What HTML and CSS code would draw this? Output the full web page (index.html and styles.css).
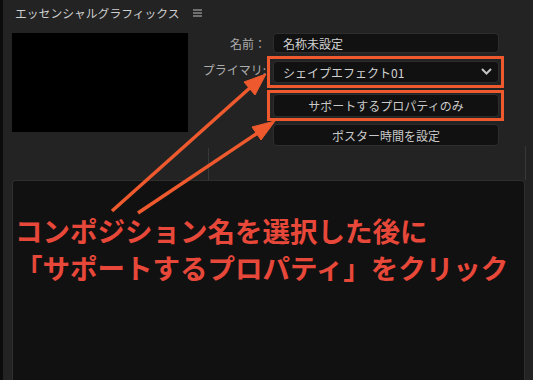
FILE: index.html
```html
<!DOCTYPE html>
<html lang="ja">
<head>
<meta charset="utf-8">
<title>エッセンシャルグラフィックス</title>
<link rel="stylesheet" href="styles.css">
</head>
<body>
<div class="app">
  <div class="edge"></div>
  <div class="main">
    <header class="hdr">
      <span class="title">エッセンシャルグラフィックス</span>
      <span class="menu">
        <svg width="9" height="8" viewBox="0 0 9 8"><path d="M0 1H9M0 4H9M0 7H9" stroke="#bdbdbd" stroke-width="1"/></svg>
      </span>
    </header>
    <section class="top">
      <div class="preview"></div>
      <div class="form">
        <div class="row">
          <label class="lbl">名前：</label>
          <div class="field">名称未設定</div>
        </div>
        <div class="row">
          <label class="lbl lbl-up">プライマリ:</label>
          <div class="hl hl-a">
            <div class="field select">
              <span>シェイプエフェクト01</span>
              <svg class="chev" width="11" height="7" viewBox="0 0 11 7"><polyline points="1,1 5.5,5.5 10,1" fill="none" stroke="#c4c4c4" stroke-width="2"/></svg>
            </div>
          </div>
        </div>
        <div class="row">
          <span class="lbl"></span>
          <div class="hl hl-b">
            <div class="btn btn-b">サポートするプロパティのみ</div>
          </div>
        </div>
        <div class="row">
          <span class="lbl"></span>
          <div class="btn btn-c">ポスター時間を設定</div>
        </div>
      </div>
    </section>
    <div class="gap">
      <div class="vline vline-a"></div>
      <div class="vline vline-b"></div>
    </div>
    <section class="panel">
      <p class="note">コンポジション名を選択した後に<br>「サポートするプロパティ」をクリック</p>
    </section>
  </div>
  <svg class="arrows" width="533" height="380" viewBox="0 0 533 380">
    <g fill="#ee5a2d" stroke="#ee5a2d">
      <line x1="112" y1="211" x2="252" y2="86" stroke-width="3.5"/>
      <polygon points="266,74 255,95 244,82" stroke-width="1"/>
      <line x1="138" y1="213" x2="259" y2="132" stroke-width="3.5"/>
      <polygon points="275,121 261,140 252,127" stroke-width="1"/>
    </g>
  </svg>
</div>
</body>
</html>
```

FILE: styles.css
```css
* { box-sizing: border-box; }
html, body {
  margin: 0;
  padding: 0;
  background: #232323;
  width: 533px;
  height: 380px;
  overflow: hidden;
  font-family: "Noto Sans CJK JP", "Noto Sans", "Liberation Sans", sans-serif;
}
.app {
  position: relative;
  display: flex;
  width: 533px;
  height: 380px;
}
.edge {
  width: 3px;
  flex: none;
  background: #0c0c0c;
}
.main {
  flex: 1;
  display: flex;
  flex-direction: column;
  padding-left: 9px;
  background: #232323;
}
.hdr {
  height: 33px;
  display: flex;
  align-items: flex-start;
  padding-top: 5px;
  padding-left: 3px;
  gap: 13px;
}
.title {
  font-size: 11.8px;
  line-height: 16px;
  color: #cfcfcf;
}
.menu {
  display: flex;
  align-items: center;
  height: 16px;
}
.top {
  display: flex;
  height: 113px;
}
.preview {
  width: 176px;
  height: 99px;
  background: #000;
  flex: none;
}
.form {
  display: flex;
  flex-direction: column;
  gap: 3px;
}
.form .row:nth-child(3) { margin-top: -1px; }
.row {
  display: flex;
  align-items: center;
}
.lbl {
  width: 78px;
  margin-right: 7px;
  text-align: right;
  font-size: 12px;
  color: #ababab;
  flex: none;
}
.lbl-up { align-self: flex-start; margin-top: 5px; }
.field {
  width: 226px;
  height: 20px;
  background: #111;
  border: 1px solid #2d2d2d;
  border-radius: 4px;
  font-size: 12px;
  color: #d2d2d2;
  display: flex;
  align-items: center;
  padding-left: 9px;
}
.select {
  height: 22px;
  justify-content: space-between;
  padding-right: 6px;
}
.chev { margin-bottom: 1px; }
.hl {
  border: 3px solid #ee5a2d;
  margin-left: -6px;
  padding: 2px 2px 2px 3px;
}
.hl-b { padding-top: 1px; padding-bottom: 1px; }
.btn {
  width: 226px;
  height: 23px;
  background: #111;
  border: 1px solid #2d2d2d;
  border-radius: 4px;
  font-size: 12px;
  color: #c9c9c9;
  display: flex;
  align-items: center;
  justify-content: center;
}
.btn-c { height: 22px; }
.gap {
  height: 34px;
  display: flex;
  align-items: flex-end;
}
.vline {
  width: 1px;
  background: #383838;
}
.vline-a {
  height: 32px;
  margin-left: 196px;
}
.vline-b {
  height: 34px;
  margin-left: auto;
  margin-right: 7px;
}
.panel {
  flex: 1;
  width: 513px;
  background: #111;
  border: 1px solid #2e2e2e;
  border-bottom: none;
  border-radius: 4px 4px 0 0;
  padding: 31px 0 0 2px;
}
.note {
  margin: 0;
  font-size: 27.5px;
  line-height: 37px;
  font-weight: 700;
  color: #e8483a;
  white-space: nowrap;
}
.arrows {
  position: absolute;
  left: 0;
  top: 0;
  pointer-events: none;
}
```
